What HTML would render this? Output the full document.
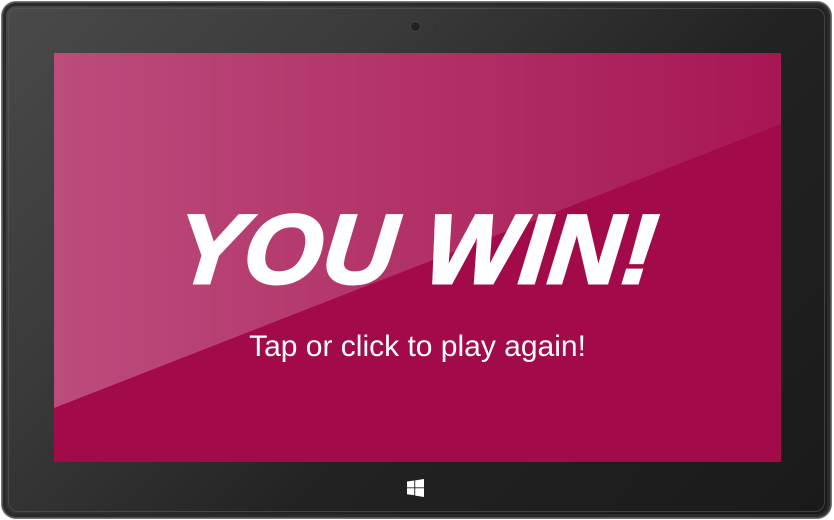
<!DOCTYPE html>
<html><head><style>
html,body{margin:0;padding:0;width:834px;height:520px;background:#fff;overflow:hidden}
.tab{position:absolute;left:2px;top:2px;width:829px;height:516px;border-radius:14px;background:linear-gradient(135deg,#4a4a4a 0%,#3a3a3a 30%,#222 60%,#1a1a1a 100%);box-shadow:inset 0 0 0 1px #555,inset 0 0 0 4px #2a2a2a,0 0 0 1px #777}
.inner{position:absolute;left:6px;top:6px;right:6px;bottom:6px;border-radius:10px;border:1px solid #5a5a5a;opacity:.6}
.screen{position:absolute;left:54px;top:53px;width:727px;height:409px;background:#a30a4a;overflow:hidden}
.glare{position:absolute;left:0;top:0;width:727px;height:409px;background:linear-gradient(90deg,rgba(255,255,255,.27),rgba(255,255,255,.05));clip-path:polygon(0 0,727px 0,727px 71px,0 355px)}
.win{position:absolute;left:0;width:727px;top:147px;text-align:center;color:#fff;font-family:"Liberation Sans",sans-serif;font-style:italic;font-weight:bold;font-size:98px;line-height:1;letter-spacing:1px;-webkit-text-stroke:3px #fff}
.win span{display:inline-block;transform:skewX(-6deg) scaleX(1.02)}
.sub{position:absolute;left:0;width:727px;top:276px;text-align:center;color:#fff;font:30px/1.2 "Liberation Sans",sans-serif}
.cam{position:absolute;left:411px;top:22px;width:9px;height:9px;border-radius:50%;background:#222;box-shadow:0 0 0 1px #444}
.cam2{position:absolute;left:434px;top:25px;width:4px;height:4px;border-radius:50%;background:#333}
.logo{position:absolute;left:407px;top:479px}
</style></head><body>
<div class="tab"><div class="inner"></div></div>
<div class="cam"></div><div class="cam2"></div>
<div class="screen"><div class="glare"></div>
<div class="win"><span>YOU WIN!</span></div>
<div class="sub">Tap or click to play again!</div></div>
<svg class="logo" width="18" height="18" viewBox="0 0 18 18"><path fill="#fff" d="M0 2.5L7.3 1.5V8.4H0ZM8.2 1.4L17 0V8.4H8.2ZM0 9.3H7.3V16.3L0 15.3ZM8.2 9.3H17V18L8.2 16.6Z"/></svg>
</body></html>
